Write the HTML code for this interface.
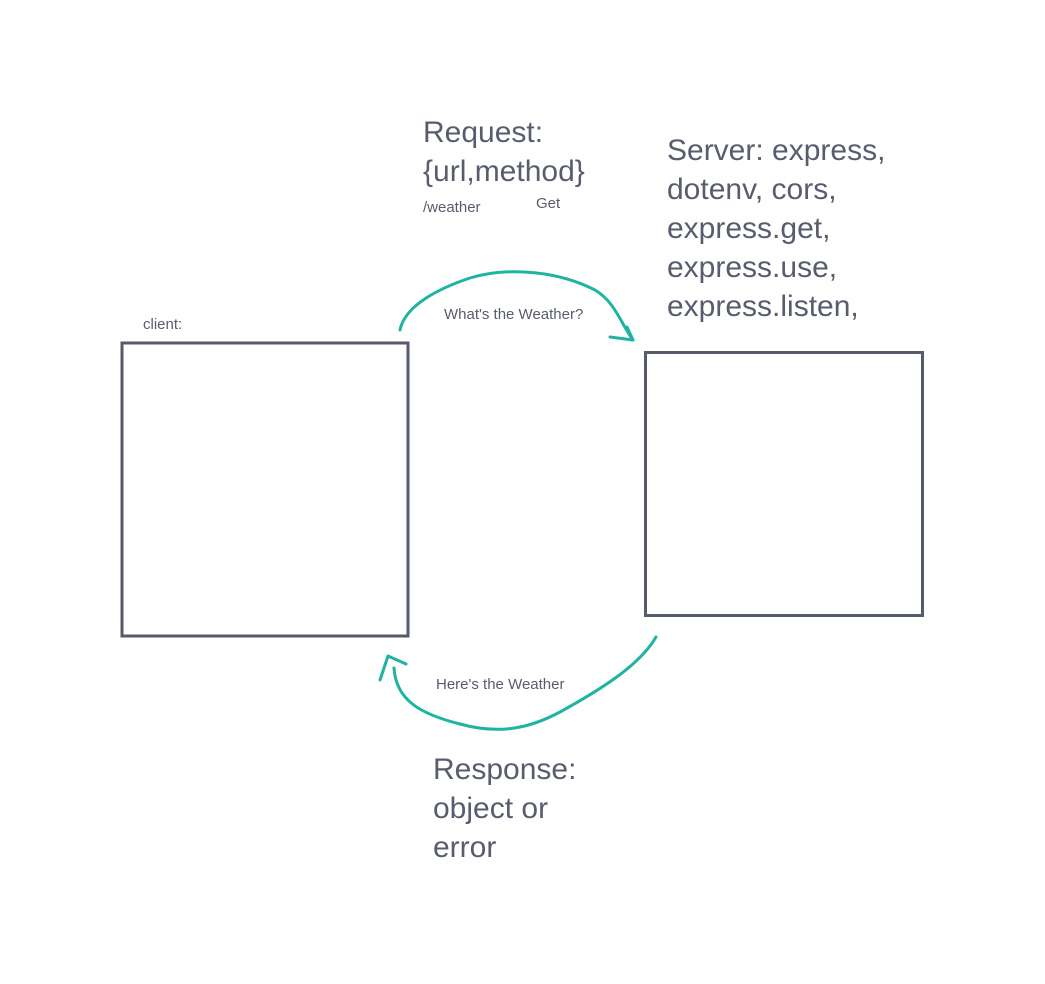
<!DOCTYPE html>
<html><head><style>
body{margin:0;width:1045px;height:984px;background:#fff;position:relative;overflow:hidden;font-family:"Liberation Sans",sans-serif;color:#585d6e}
.t{position:absolute;white-space:nowrap}
.big{font-size:30px;line-height:39px}
.sm{font-size:15px}
</style></head><body>
<svg width="1045" height="984" style="position:absolute;left:0;top:0">
<rect x="122" y="343" width="286" height="293" fill="none" stroke="#555a6c" stroke-width="3"/>
<rect x="645.5" y="352.5" width="277" height="263" fill="none" stroke="#555a6c" stroke-width="3"/>
<g fill="none" stroke="#1fb4a2" stroke-width="3" stroke-linecap="round" stroke-linejoin="round">
<path d="M400 330 C405 305 440 288 470 278 C510 266 560 272 595 290 C615 302 620 322 633 340"/>
<path d="M610 337 L633 340 L627 327"/>
<path d="M656 637 C640 665 600 690 560 712 C530 728 500 735 460 724 C420 714 396 700 394 668"/>
<path d="M380 680 L388 656 L406 664"/>
</g>
</svg>
<div class="t big" style="left:423px;top:113px">Request:<br>{url,method}</div>
<div class="t sm" style="left:423px;top:199px">/weather</div>
<div class="t sm" style="left:536px;top:195px">Get</div>
<div class="t big" style="left:667px;top:131px">Server: express,<br>dotenv, cors,<br>express.get,<br>express.use,<br>express.listen,</div>
<div class="t sm" style="left:143px;top:316px">client:</div>
<div class="t sm" style="left:444px;top:306px">What's the Weather?</div>
<div class="t sm" style="left:436px;top:676px">Here's the Weather</div>
<div class="t big" style="left:433px;top:750px">Response:<br>object or<br>error</div>
</body></html>
